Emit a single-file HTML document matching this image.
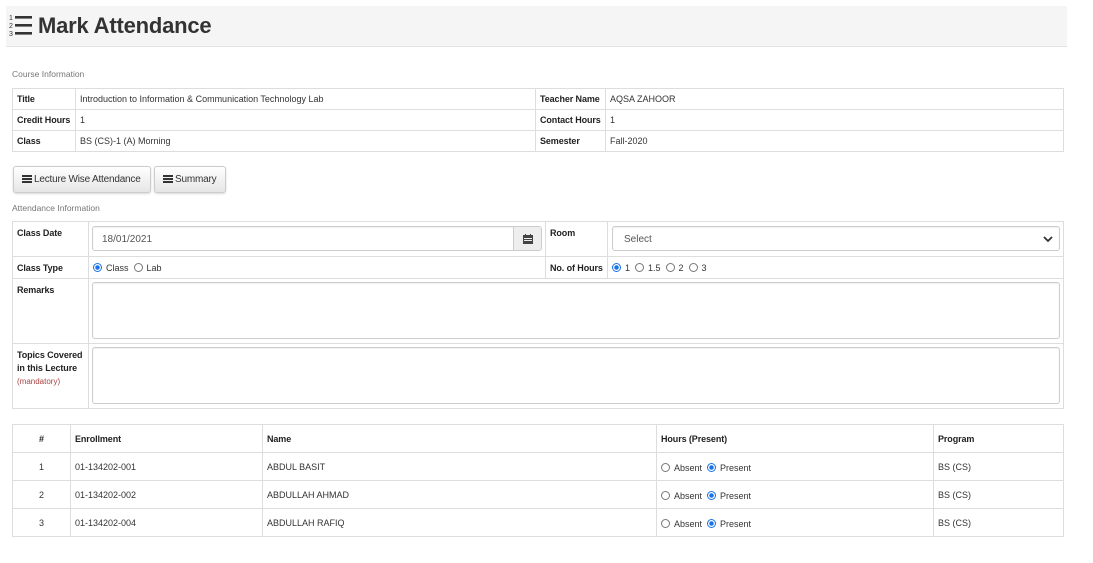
<!DOCTYPE html>
<html><head><meta charset="utf-8"><style>
*{box-sizing:border-box;margin:0;padding:0}
body{width:1093px;height:563px;background:#fff;font-family:"Liberation Sans",Arial,sans-serif;font-size:9px;color:#333;position:relative;overflow:hidden}
.a{position:absolute}
.hdr{left:6px;top:6px;width:1061px;height:41px;background:#f5f5f5;border-bottom:1px solid #e3e3e3}
.ttl{left:38px;top:13px;font-size:22px;font-weight:bold;color:#333;letter-spacing:-0.2px}
.lbl{color:#777;font-size:8.5px}
table{position:absolute;border-collapse:collapse;table-layout:fixed}
td{border:1px solid #ddd;padding:0 4px;vertical-align:middle;font-size:9px;color:#333;white-space:nowrap}
b{font-weight:bold;color:#222;letter-spacing:-0.1px}
.btn{position:absolute;top:166px;height:27px;border:1px solid #ccc;border-radius:3px;background:linear-gradient(#fff,#e6e6e6);box-shadow:0 1px 2px rgba(0,0,0,.15);font-size:10px;color:#333;padding-left:8px;line-height:25px;letter-spacing:-0.2px}
.ic{display:inline-block;width:10px;height:8px;vertical-align:-1px;margin-right:2px;background:repeating-linear-gradient(#333 0 2px,transparent 2px 3px)}
.inp{position:absolute;border:1px solid #ccc;border-radius:3px;background:#fff;box-shadow:inset 0 1px 1px rgba(0,0,0,.06)}
.r{display:inline-block;width:9px;height:9px;border:1px solid #777;border-radius:50%;vertical-align:-1px;margin:0 4px 0 0;background:#fff}
.rc{border:1px solid #1a73e8;background:radial-gradient(circle,#1a73e8 0 2px,#fff 2.5px)}
.t3 td{height:28px}
</style></head><body>
<div class="a hdr"></div>
<svg class="a" style="left:9px;top:13px" width="24" height="24" viewBox="0 0 24 24"><text x="0" y="7" font-size="7" font-family="Liberation Sans" fill="#333">1</text><text x="0" y="15" font-size="7" font-family="Liberation Sans" fill="#333">2</text><text x="0" y="23" font-size="7" font-family="Liberation Sans" fill="#333">3</text><rect x="6" y="3" width="17" height="2.6" fill="#333"/><rect x="6" y="11" width="17" height="2.6" fill="#333"/><rect x="6" y="19" width="17" height="2.6" fill="#333"/></svg>
<div class="a ttl">Mark Attendance</div>
<div class="a lbl" style="left:12px;top:69px">Course Information</div>
<table style="left:12px;top:88px;width:1052px">
<col style="width:63px"><col style="width:460px"><col style="width:70px"><col>
<tr style="height:21px"><td><b>Title</b></td><td>Introduction to Information &amp; Communication Technology Lab</td><td><b>Teacher Name</b></td><td>AQSA ZAHOOR</td></tr>
<tr style="height:21px"><td><b>Credit Hours</b></td><td>1</td><td><b>Contact Hours</b></td><td>1</td></tr>
<tr style="height:21px"><td><b>Class</b></td><td>BS (CS)-1 (A) Morning</td><td><b>Semester</b></td><td>Fall-2020</td></tr>
</table>
<div class="btn" style="left:13px;width:138px"><span class="ic"></span>Lecture Wise Attendance</div>
<div class="btn" style="left:154px;width:72px"><span class="ic"></span>Summary</div>
<div class="a lbl" style="left:12px;top:203px">Attendance Information</div>
<table style="left:12px;top:221px;width:1052px">
<col style="width:76px"><col style="width:457px"><col style="width:62px"><col>
<tr style="height:35px"><td style="vertical-align:top;padding-top:6px"><b>Class Date</b></td><td></td><td style="vertical-align:top;padding-top:6px"><b>Room</b></td><td></td></tr>
<tr style="height:22px"><td><b>Class Type</b></td><td><span class="r rc"></span>Class &nbsp;<span class="r"></span>Lab</td><td><b>No. of Hours</b></td><td><span class="r rc"></span>1 &nbsp;<span class="r"></span>1.5 &nbsp;<span class="r"></span>2 &nbsp;<span class="r"></span>3</td></tr>
<tr style="height:65px"><td style="vertical-align:top;padding-top:6px"><b>Remarks</b></td><td colspan="3"></td></tr>
<tr style="height:65px"><td style="vertical-align:top;padding-top:5px;line-height:13px"><b>Topics Covered</b><br><b>in this Lecture</b><br><span style="color:#a94442;font-size:8px">(mandatory)</span></td><td colspan="3"></td></tr>
</table>
<div class="inp" style="left:92px;top:226px;width:450px;height:25px;overflow:hidden"><span class="a" style="left:9px;top:7px;font-size:10px;color:#555">18/01/2021</span><div class="a" style="right:0;top:0;width:28px;height:23px;background:#eee;border-left:1px solid #ccc"><svg class="a" style="left:9px;top:7px" width="10" height="10" viewBox="0 0 10 10"><rect x="0" y="1" width="10" height="9" fill="#444"/><rect x="1" y="4" width="8" height="1" fill="#eee"/><rect x="1" y="6" width="8" height="1" fill="#eee"/><rect x="2" y="0" width="1" height="2" fill="#444"/><rect x="7" y="0" width="1" height="2" fill="#444"/></svg></div></div>
<div class="inp" style="left:612px;top:226px;width:448px;height:25px"><span class="a" style="left:11px;top:7px;font-size:10px;color:#555">Select</span><svg class="a" style="right:6px;top:8px" width="10" height="8" viewBox="0 0 10 8"><path d="M1 2 L5 6 L9 2" stroke="#333" stroke-width="1.8" fill="none"/></svg></div>
<div class="inp" style="left:92px;top:282px;width:968px;height:57px"></div>
<div class="inp" style="left:92px;top:347px;width:968px;height:57px"></div>
<table class="t3" style="left:12px;top:424px;width:1052px">
<col style="width:58px"><col style="width:192px"><col style="width:394px"><col style="width:277px"><col>
<tr><td style="text-align:center"><b>#</b></td><td><b>Enrollment</b></td><td><b>Name</b></td><td><b>Hours (Present)</b></td><td><b>Program</b></td></tr>
<tr><td style="text-align:center">1</td><td>01-134202-001</td><td>ABDUL BASIT</td><td style="padding-top:3px"><span class="r"></span>Absent &nbsp;<span class="r rc"></span>Present</td><td>BS (CS)</td></tr>
<tr><td style="text-align:center">2</td><td>01-134202-002</td><td>ABDULLAH AHMAD</td><td style="padding-top:3px"><span class="r"></span>Absent &nbsp;<span class="r rc"></span>Present</td><td>BS (CS)</td></tr>
<tr><td style="text-align:center">3</td><td>01-134202-004</td><td>ABDULLAH RAFIQ</td><td style="padding-top:3px"><span class="r"></span>Absent &nbsp;<span class="r rc"></span>Present</td><td>BS (CS)</td></tr>
</table>
</body></html>
